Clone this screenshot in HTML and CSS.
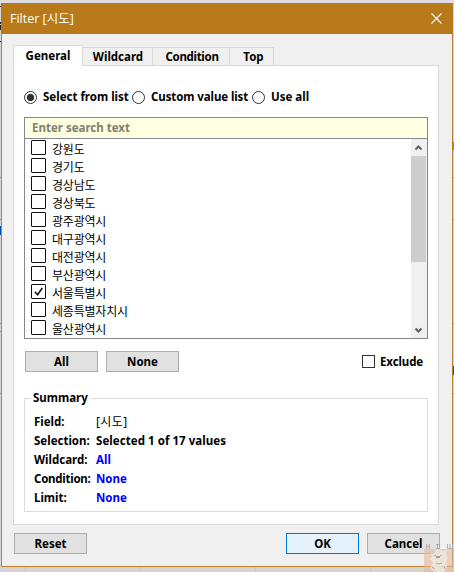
FILE: index.html
```html
<!DOCTYPE html>
<html lang="ko">
<head>
<meta charset="utf-8">
<title>Filter</title>
<link rel="stylesheet" href="styles.css">
</head>
<body>
<svg class="backdrop" width="454" height="572" shape-rendering="crispEdges">
  <path fill="#dedee0" d="M0 0h454v3H0z"/>
  <path fill="#d4d4d4" d="M0 566h454v6H0z"/>
  <path fill="#c5c5c5" d="M25 567h1v5h-1zM140 567h1v5h-1zM255 567h1v5h-1zM370 567h1v5h-1z"/>
  <path fill="#999" d="M0 177h1v1H0zM0 219h1v1H0zM0 323h1v1H0zM0 331h1v1H0zM0 393h1v1H0zM453 177h1v1h-1zM453 219h1v1h-1zM453 323h1v1h-1zM453 393h1v1h-1z"/>
  <path fill="#222" d="M0 6h1v1H0zM0 22h1v2H0zM0 25h1v5H0zM0 41h1v1H0z"/>
  <path fill="#0054a6" d="M0 226h1v9H0zM453 366h1v9h-1z"/>
  <path fill="#b8791a" d="M453 142h1v8h-1z"/>
</svg>
<main class="window">
  <header class="titlebar">
    <span class="title">Filter [시도]</span>
    <svg class="close" width="11" height="11" viewBox="0 0 11 11"><path d="M.5.5l10 10M10.500.5l-10 10"/></svg>
  </header>
  <nav class="tabs">
    <span class="tab active">General</span><span class="tab wildcard">Wildcard</span><span class="tab condition">Condition</span><span class="tab top">Top</span>
  </nav>
  <section class="panel">
    <div class="radios">
      <label class="choice first"><i class="radio on"></i><span>Select from list</span></label>
      <label class="choice second"><i class="radio"></i><span>Custom value list</span></label>
      <label class="choice"><i class="radio"></i><span>Use all</span></label>
    </div>
    <div class="listbox">
      <div class="search">Enter search text</div>
      <div class="listbody">
        <ul class="items">
          <li><i class="box"></i>강원도</li>
          <li><i class="box"></i>경기도</li>
          <li><i class="box"></i>경상남도</li>
          <li><i class="box"></i>경상북도</li>
          <li><i class="box"></i>광주광역시</li>
          <li><i class="box"></i>대구광역시</li>
          <li><i class="box"></i>대전광역시</li>
          <li><i class="box"></i>부산광역시</li>
          <li><i class="box"><svg width="13" height="13" viewBox="0 0 13 13"><path d="M3 6.800l2.600 3L10.300 3"/></svg></i>서울특별시</li>
          <li><i class="box"></i>세종특별자치시</li>
          <li><i class="box"></i>울산광역시</li>
        </ul>
        <div class="scrollbar">
          <svg width="16" height="17" viewBox="0 0 16 17"><path d="M4.500 10.500L7.500 7.500l3 3"/></svg>
          <div class="thumb"></div>
          <svg width="16" height="17" viewBox="0 0 16 17"><path d="M4.500 7.500l3 3 3-3"/></svg>
        </div>
      </div>
    </div>
    <div class="actions">
      <span class="btn">All</span><span class="btn">None</span>
      <label class="exclude"><i class="smallbox"></i><span>Exclude</span></label>
    </div>
    <fieldset class="summary">
      <legend>Summary</legend>
      <dl>
        <dt>Field:</dt><dd class="field">[시도]</dd>
        <dt>Selection:</dt><dd class="wide">Selected 1 of 17 values</dd>
        <dt>Wildcard:</dt><dd class="link">All</dd>
        <dt class="tight">Condition:</dt><dd class="link">None</dd>
        <dt>Limit:</dt><dd class="link">None</dd>
      </dl>
    </fieldset>
  </section>
  <footer class="footer">
    <span class="btn reset">Reset</span><span class="btn ok">OK</span><span class="btn">Cancel</span>
  </footer>
</main>
<svg class="mark" width="30" height="28" viewBox="0 0 30 28">
  <path fill="#e6b894" fill-opacity=".6" d="M0 5h30v23H0z"/>
  <path fill="none" stroke="#b4afa9" stroke-width="1" d="M2.500 0v5M5.500 0v5M2.500 2.500h3M13.500 0v5M12 .5h3M12 4.500h3M23.500 0v4.500h5V0M26 0v4"/>
  <path fill="#ece7e2" fill-opacity=".85" d="M7 9l3 1 1-4 4-1 4 2 4-1-1 4 2 4-2 4 1 5-3 5h-9l-5-4 3-5-3-4 2-2z"/>
  <path fill="none" stroke="#b5a79b" stroke-width="1" d="M10 12l2-1M16 11l2 1M12 19l3 1 3-1M8 23l3 2M20 22l1 3"/>
  <path fill="#a89b92" d="M12 12h4v2h-4z"/>
</svg>
</body>
</html>
```
FILE: styles.css
```css
* { box-sizing: border-box; }
body {
  margin: 0; width: 454px; height: 572px; padding: 3px 1px 0; overflow: hidden;
  background: #d6d6d6; color: #000; position: relative;
  font: bold 11.5px/18px "Noto Sans", "Noto Sans CJK KR", sans-serif;
  white-space: nowrap;
}
.backdrop { position: absolute; left: 0; top: 0; z-index: -1; }
.window { width: 452px; height: 564px; border: 1px solid #bd8126; background: #f0f0f0; }
.titlebar {
  height: 31px; margin: -1px -1px 0; padding: 0 11px 0 9px; background: #b8791a; color: #fff;
  display: flex; align-items: center; justify-content: space-between;
  font: 12.5px/30px "Open Sans", "Noto Sans CJK KR", sans-serif;
}
.close path, .scrollbar path, .box path { fill: none; stroke: #fff; stroke-width: 1.1; }
.tabs { height: 31px; padding: 11px 0 0 11px; display: flex; align-items: flex-end; }
.tab { height: 18px; border: 1px solid #d9d9d9; border-width: 1px 1px 0 0; text-align: center; }
.tab.active { width: 70px; height: 21px; border-left-width: 1px; background: #fff; position: relative; margin-bottom: -1px; line-height: 20px; }
.wildcard { width: 70px; padding-left: 1px; }
.condition { width: 77px; padding-left: 2px; letter-spacing: -.3px; }
.top { width: 44px; padding-left: 4px; }
.panel { width: 426px; height: 460px; margin-left: 11px; padding: 22px 10px 0; border: 1px solid #d9d9d9; background: #fff; }
.radios { display: flex; height: 18px; }
.choice { display: flex; align-items: center; gap: 6px; width: 108px; }
.second { width: 120px; letter-spacing: -.1px; }
.radio { width: 13px; height: 13px; border: 1px solid #333; border-radius: 50%; background: #fff; }
.radio.on { background: radial-gradient(circle, #333 0 3.3px, #fff 4.100px); }
.listbox { width: 404px; height: 222px; margin-top: 11px; border: 1px solid #828790; }
.search { height: 21px; padding-left: 7px; border-bottom: 1px solid #828790; background: #ffffe1; color: #808070; line-height: 20px; }
.listbody { display: flex; justify-content: space-between; height: 199px; }
.items { list-style: none; margin: 0; padding: 1px 0 0 6px; font: 12px/18px "Noto Sans CJK KR", sans-serif; letter-spacing: -.2px; }
.items li { display: flex; height: 18px; gap: 6px; }
.box { width: 15px; height: 15px; border: 1px solid #111; border-radius: 1px; background: #fff; }
.box svg { display: block; }
.box path { stroke: #111; stroke-width: 1.6; }
.scrollbar { width: 16px; background: #f0f0f0; display: flex; flex-direction: column; }
.scrollbar path { stroke: #606060; stroke-width: 2; }
.scrollbar svg { display: block; }
.thumb { width: 15px; height: 106px; margin-bottom: 59px; background: #cdcdcd; }
.actions { display: flex; gap: 8px; margin: 12px 0 0 1px; height: 21px; }
.btn { width: 73px; height: 21px; border: 1px solid #adadad; background: #e1e1e1; text-align: center; line-height: 20px; }
.exclude { display: flex; align-items: center; gap: 5px; width: 62px; margin-left: auto; margin-right: 4px; letter-spacing: -.1px; }
.smallbox { flex: none; width: 13px; height: 13px; border: 1px solid #333; background: #fff; }
.summary { width: 404px; height: 123px; margin: 17px 0 0; padding: 5px 9px 0; border: 1px solid #dcdcdc; }
legend { padding: 0 2px; margin-left: -3px; }
dl { display: grid; grid-template-columns: 62px auto; grid-auto-rows: 19px; margin: 0; line-height: 19px; }
dd { margin: 0; }
.field { font-weight: normal; font-size: 12px; letter-spacing: .4px; }
.tight { letter-spacing: -.25px; }
.wide { letter-spacing: .05px; }
.link { color: #00f; }
.footer { display: flex; gap: 8px; margin: 8px 0 0 12px; }
.reset { margin-right: 191px; }
.ok { border-color: #0078d7; background: #e5f1fb; }
.mark { position: absolute; left: 424px; top: 544px; }
```
